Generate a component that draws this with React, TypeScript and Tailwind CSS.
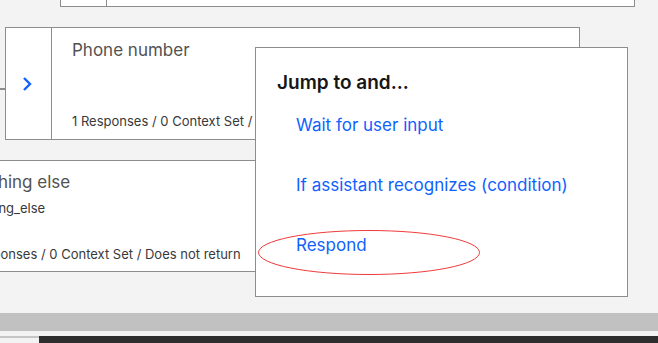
export default function App() {
  const font = "font-['Inter','Noto_Sans',sans-serif]";
  return (
    <div className={`relative w-[658px] h-[343px] overflow-hidden bg-[#f3f3f3] flex flex-col ${font}`}>
      {/* top node (cut off) */}
      <div className="ml-[60px] w-[575px] h-[7px] bg-white border-x border-b border-[#8d8d8d] flex">
        <div className="w-[46px] border-r border-[#8d8d8d]" />
      </div>

      {/* Phone number node */}
      <div className="relative mt-[20px] ml-[5px] w-[575px] h-[113px] bg-white border border-[#8d8d8d] flex">
        <div className="absolute -left-[6px] top-[60px] w-[6px] h-[2px] bg-[#8d8d8d]" />
        <div className="w-[46px] border-r border-[#8d8d8d] flex items-center justify-center">
          <svg width="12" height="16" viewBox="0 0 12 16" className="-ml-[4px]">
            <path d="M3 2 L9 8 L3 14" fill="none" stroke="#0f62fe" strokeWidth="2.4" />
          </svg>
        </div>
        <div className="flex flex-col justify-between pl-[20px] pt-[10px] pb-[10px]">
          <div className="text-[17px] leading-6 text-[#525252]">Phone number</div>
          <div className="text-[13px] leading-4 text-[#393939]">1 Responses / 0 Context Set / Does not return</div>
        </div>
      </div>

      {/* Anything else node (cut off left) */}
      <div className="mt-[20px] -ml-[106px] w-[420px] h-[112px] bg-white border border-[#8d8d8d] flex">
        <div className="w-[46px] border-r border-[#8d8d8d]" />
        <div className="flex flex-col pl-[20px] pt-[9px] pb-[9px]">
          <div className="text-[17px] leading-6 text-[#525252]">Anything else</div>
          <div className="text-[13px] leading-4 mt-[6px] text-[#393939]">anything_else</div>
          <div className="mt-auto text-[13px] leading-4 text-[#393939]">1 Responses / 0 Context Set / Does not return</div>
        </div>
      </div>

      <div className="mt-[41px] h-[18px] bg-[#c1c1c1]" />
      <div className="mt-[5px] flex flex-1">
        <div className="w-[39px] border-t-2 border-[#c6c6c6] bg-[#f3f3f3]" />
        <div className="flex-1 bg-[#2e2e2e]" />
      </div>

      {/* popover menu */}
      <div className="absolute left-[255px] top-[47px] w-[373px] h-[250px] bg-white border border-[#8d8d8d] pl-[21px] pt-[21px]">
        <div className="text-[19px] leading-7 font-semibold text-[#161616]">Jump to and...</div>
        <div className="mt-[16px] pl-[19px] flex flex-col gap-[36px] text-[17px] leading-6 text-[#0f62fe]">
          <div>Wait for user input</div>
          <div>If assistant recognizes (condition)</div>
          <div>Respond</div>
        </div>
      </div>

      {/* red annotation ellipse */}
      <svg className="absolute left-[256px] top-[228px]" width="226" height="50" viewBox="0 0 226 50">
        <ellipse cx="113" cy="24.5" rx="110.5" ry="22" fill="none" stroke="#f03a3a" strokeWidth="1" />
      </svg>
    </div>
  );
}
